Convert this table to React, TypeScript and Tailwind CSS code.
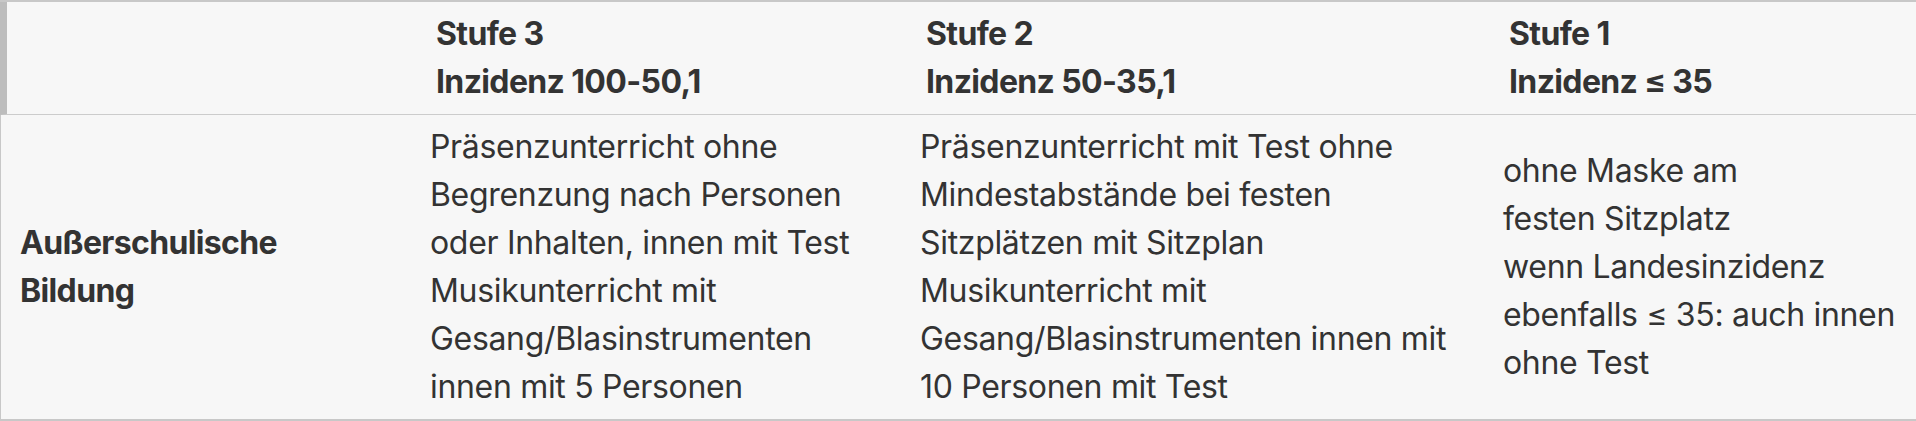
import React from 'react';

const header = [
  { stufe: '', inzidenz: '' },
  { stufe: 'Stufe 3', inzidenz: 'Inzidenz 100-50,1' },
  { stufe: 'Stufe 2', inzidenz: 'Inzidenz 50-35,1' },
  { stufe: 'Stufe 1', inzidenz: 'Inzidenz ≤ 35' },
];

const stufe3 = [
  'Präsenzunterricht ohne',
  'Begrenzung nach Personen',
  'oder Inhalten, innen mit Test',
  'Musikunterricht mit',
  'Gesang/Blasinstrumenten',
  'innen mit 5 Personen',
];

const stufe2 = [
  'Präsenzunterricht mit Test ohne',
  'Mindestabstände bei festen',
  'Sitzplätzen mit Sitzplan',
  'Musikunterricht mit',
  'Gesang/Blasinstrumenten innen mit',
  '10 Personen mit Test',
];

const stufe1 = [
  'ohne Maske am',
  'festen Sitzplatz',
  'wenn Landesinzidenz',
  'ebenfalls ≤ 35: auch innen',
  'ohne Test',
];

function Lines({ lines }: { lines: string[] }) {
  return (
    <>
      {lines.map((line, i) => (
        <div key={i} className="whitespace-nowrap">{line}</div>
      ))}
    </>
  );
}

export default function App() {
  return (
    <div className="min-h-screen bg-white">
      <div className="bg-[#f7f7f7] text-[#333333] font-['Inter',sans-serif] text-[32px] leading-[48px] tracking-[-0.01em] border-t-2 border-b-[3px] border-[#c8c8c8]">
        {/* Kopfzeile */}
        <div className="grid grid-cols-[410px_490px_583px_1fr] border-l-[7px] border-l-[#bdbdbd] border-b border-b-[#cccccc] font-bold tracking-[-0.02em]">
          {header.map((h, i) => (
            <div key={i} className="px-[19px] py-2 min-h-[112px]">
              {h.stufe && <div>{h.stufe}</div>}
              {h.inzidenz && <div>{h.inzidenz}</div>}
            </div>
          ))}
        </div>

        {/* Zeile: Außerschulische Bildung */}
        <div className="grid grid-cols-[410px_490px_583px_1fr] border-l border-l-[#c8c8c8]">
          <div className="px-[19px] py-2 flex flex-col justify-center font-bold tracking-[-0.02em]">
            <div>Außerschulische</div>
            <div>Bildung</div>
          </div>
          <div className="px-[19px] py-2">
            <Lines lines={stufe3} />
          </div>
          <div className="px-[19px] py-2">
            <Lines lines={stufe2} />
          </div>
          <div className="px-[19px] py-2 flex flex-col justify-center">
            <Lines lines={stufe1} />
          </div>
        </div>
      </div>
    </div>
  );
}
